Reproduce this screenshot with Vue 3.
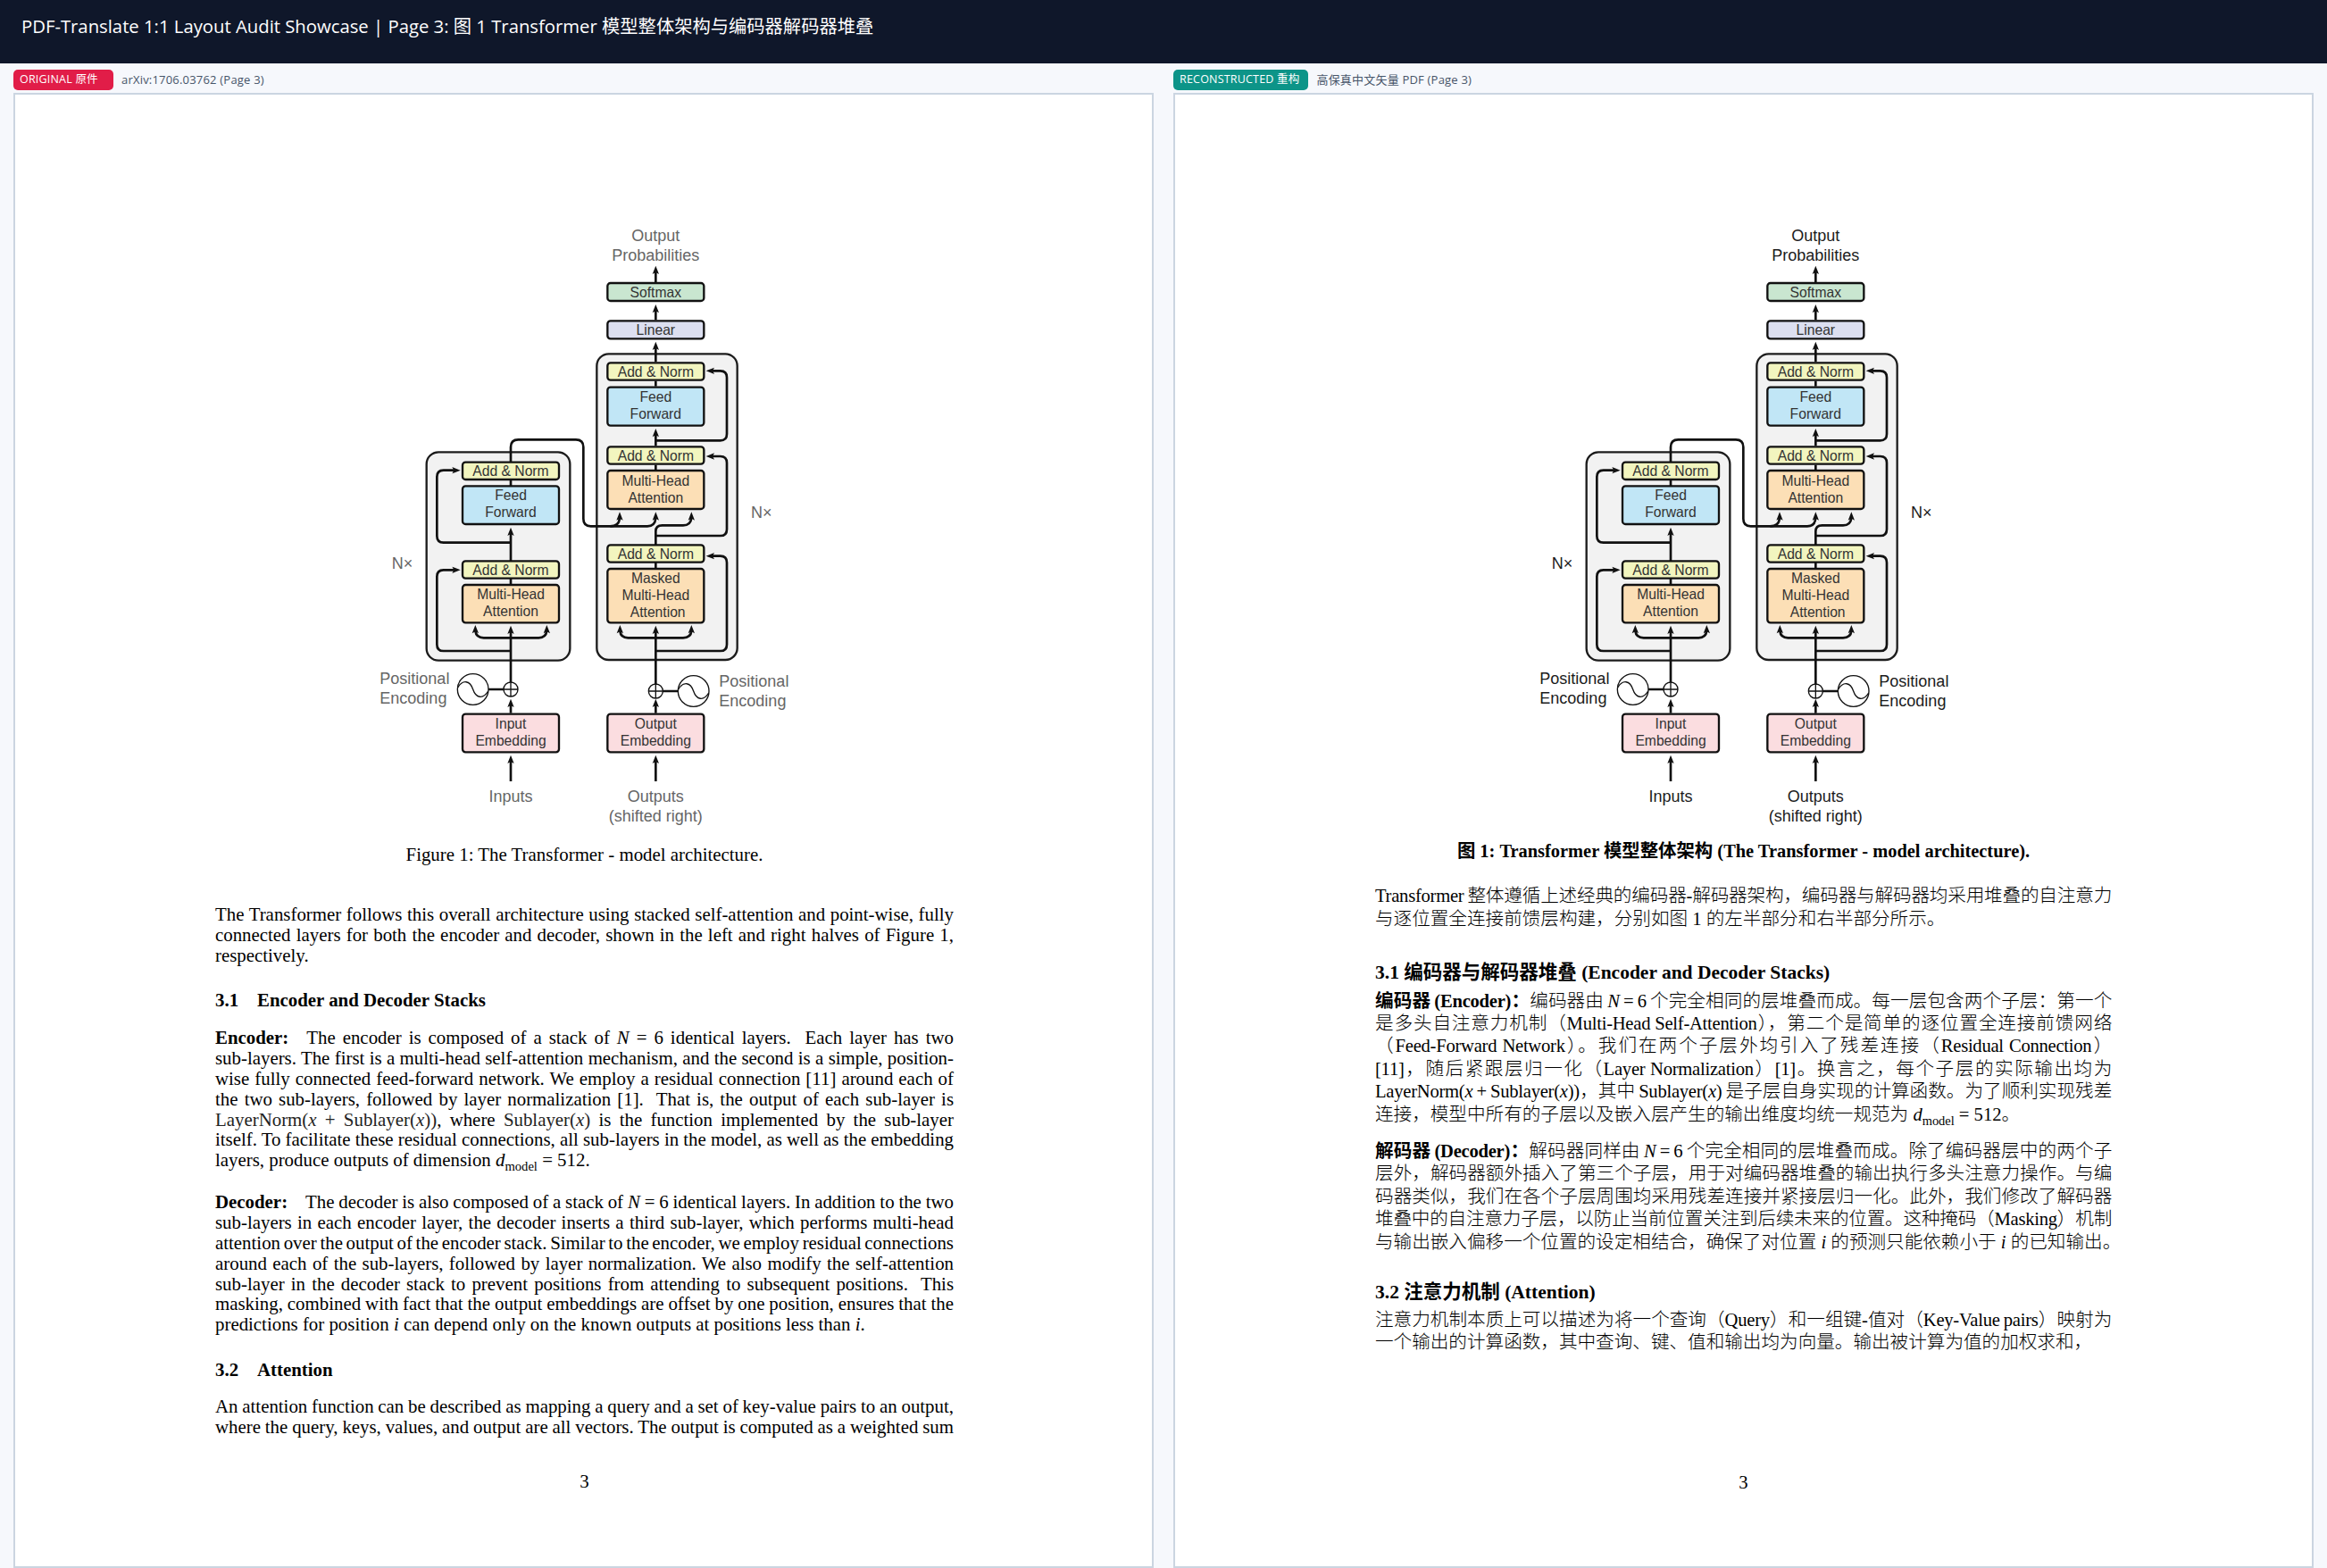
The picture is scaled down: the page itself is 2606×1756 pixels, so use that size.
<template>
  <div class="showcase">
    <header class="topbar">PDF-Translate 1:1 Layout Audit Showcase | Page 3: 图 1 Transformer 模型整体架构与编码器解码器堆叠</header>
    <main class="compare">
      <section v-for="panel in panels" :key="panel.id" class="panel">
        <div class="panel__head">
          <span class="badge" :class="'badge--' + panel.id">{{ panel.badge }}</span>
          <span class="panel__source">{{ panel.source }}</span>
        </div>
        <div class="sheet" :class="'sheet--' + panel.id">
          <svg class="diagram" viewBox="0 0 1560 2100" width="520" height="700">
            <!-- encoder and decoder stacks -->
            <rect v-for="s in stacks" :key="s.x" :x="s.x" :y="s.y" :width="s.w" :height="s.h" rx="40" fill="#f2f2f2" stroke="#1c1c1c" stroke-width="7" />
            <!-- wires -->
            <path v-for="(d, i) in wires" :key="i" :d="d" fill="none" stroke="#111" stroke-width="8" />
            <path v-for="(a, i) in arrowPaths" :key="i" :d="a" fill="#111" />
            <!-- blocks -->
            <g v-for="b in blocks" :key="b.x + '-' + b.y">
              <rect :x="b.x" :y="b.y" width="324" :height="b.h" rx="10" :fill="b.fill" stroke="#111" stroke-width="7" />
              <text v-for="t in b.lines" :key="t.s" class="block-text" :x="t.x || b.x + 162" :y="t.y" text-anchor="middle">{{ t.s }}</text>
            </g>
            <!-- positional encoding -->
            <g v-for="p in encodings" :key="p.plus" fill="none" stroke="#111">
              <line :x1="p.plus" :y1="p.y" :x2="p.sine" :y2="p.y" stroke-width="7" />
              <circle :cx="p.plus" :cy="p.y" r="24" fill="#fff" stroke-width="4" />
              <path :d="`M${p.plus - 24} ${p.y}H${p.plus + 24}M${p.plus} ${p.y - 24}V${p.y + 24}`" stroke-width="4" />
              <circle :cx="p.sine" :cy="p.y" r="52" fill="#fff" stroke-width="4" />
              <path :d="`M${p.sine - 51} ${p.y - 6}C${p.sine - 34} ${p.y - 34} ${p.sine - 10} ${p.y - 30} ${p.sine} ${p.y}S${p.sine + 34} ${p.y + 34} ${p.sine + 51} ${p.y + 6}`" stroke-width="4" />
            </g>
            <text v-for="l in labels" :key="l.s + l.y" class="outer-text" :class="'outer-text--' + panel.id" :x="l.x" :y="l.y" :text-anchor="l.anchor || 'middle'">{{ l.s }}</text>
          </svg>

          <template v-if="panel.id === 'original'">
            <p class="en-caption">Figure 1: The Transformer - model architecture.</p>
            <p class="en-par en-par--intro">
              <span class="ln">The Transformer follows this overall architecture using stacked self-attention and point-wise, fully</span>
              <span class="ln">connected layers for both the encoder and decoder, shown in the left and right halves of Figure 1,</span>
              <span class="ln ln--end">respectively.</span>
            </p>
            <h3 class="en-head en-head--first"><span class="en-head__no">3.1</span>Encoder and Decoder Stacks</h3>
            <p class="en-par en-par--enc">
              <span class="ln"><b class="run-in">Encoder:</b>The encoder is composed of a stack of <i>N</i> = 6 identical layers.&nbsp; Each layer has two</span>
              <span class="ln">sub-layers. The first is a multi-head self-attention mechanism, and the second is a simple, position-</span>
              <span class="ln">wise fully connected feed-forward network. We employ a residual connection [11] around each of</span>
              <span class="ln">the two sub-layers, followed by layer normalization [1].&nbsp; That is, the output of each sub-layer is</span>
              <span class="ln"><span class="cm">LayerNorm(<i>x</i> + Sublayer(<i>x</i>))</span>, where <span class="cm">Sublayer(<i>x</i>)</span> is the function implemented by the sub-layer</span>
              <span class="ln">itself. To facilitate these residual connections, all sub-layers in the model, as well as the embedding</span>
              <span class="ln ln--end">layers, produce outputs of dimension <i>d</i><sub>model</sub> = 512.</span>
            </p>
            <p class="en-par en-par--dec">
              <span class="ln"><b class="run-in">Decoder:</b>The decoder is also composed of a stack of <i>N</i> = 6 identical layers. In addition to the two</span>
              <span class="ln">sub-layers in each encoder layer, the decoder inserts a third sub-layer, which performs multi-head</span>
              <span class="ln">attention over the output of the encoder stack. Similar to the encoder, we employ residual connections</span>
              <span class="ln">around each of the sub-layers, followed by layer normalization. We also modify the self-attention</span>
              <span class="ln">sub-layer in the decoder stack to prevent positions from attending to subsequent positions.&nbsp; This</span>
              <span class="ln">masking, combined with fact that the output embeddings are offset by one position, ensures that the</span>
              <span class="ln ln--end">predictions for position <i>i</i> can depend only on the known outputs at positions less than <i>i</i>.</span>
            </p>
            <h3 class="en-head en-head--second"><span class="en-head__no">3.2</span>Attention</h3>
            <p class="en-par en-par--att">
              <span class="ln">An attention function can be described as mapping a query and a set of key-value pairs to an output,</span>
              <span class="ln">where the query, keys, values, and output are all vectors. The output is computed as a weighted sum</span>
            </p>
            <p class="en-folio">3</p>
          </template>

          <template v-else>
            <p class="zh-caption">图 1: Transformer 模型整体架构 (The Transformer - model architecture).</p>
            <p class="zh-par zh-par--intro">
              <span class="ln">Transformer 整体遵循上述经典的编码器-解码器架构，编码器与解码器均采用堆叠的自注意力</span>
              <span class="ln ln--end">与逐位置全连接前馈层构建，分别如图 1 的左半部分和右半部分所示。</span>
            </p>
            <h3 class="zh-head zh-head--first">3.1 编码器与解码器堆叠 (Encoder and Decoder Stacks)</h3>
            <p class="zh-par zh-par--enc">
              <span class="ln"><b>编码器 (Encoder)：</b>编码器由 <i>N</i> = 6 个完全相同的层堆叠而成。每一层包含两个子层：第一个</span>
              <span class="ln">是多头自注意力机制（Multi-Head Self-Attention），第二个是简单的逐位置全连接前馈网络</span>
              <span class="ln">（Feed-Forward Network）。我们在两个子层外均引入了残差连接（Residual Connection）</span>
              <span class="ln">[11]，随后紧跟层归一化（Layer Normalization）[1]。换言之，每个子层的实际输出均为</span>
              <span class="ln">LayerNorm(<i>x</i> + Sublayer(<i>x</i>))，其中 Sublayer(<i>x</i>) 是子层自身实现的计算函数。为了顺利实现残差</span>
              <span class="ln ln--end">连接，模型中所有的子层以及嵌入层产生的输出维度均统一规范为 <i>d</i><sub>model</sub> = 512。</span>
            </p>
            <p class="zh-par zh-par--dec">
              <span class="ln"><b>解码器 (Decoder)：</b>解码器同样由 <i>N</i> = 6 个完全相同的层堆叠而成。除了编码器层中的两个子</span>
              <span class="ln">层外，解码器额外插入了第三个子层，用于对编码器堆叠的输出执行多头注意力操作。与编</span>
              <span class="ln">码器类似，我们在各个子层周围均采用残差连接并紧接层归一化。此外，我们修改了解码器</span>
              <span class="ln">堆叠中的自注意力子层，以防止当前位置关注到后续未来的位置。这种掩码（Masking）机制</span>
              <span class="ln ln--end">与输出嵌入偏移一个位置的设定相结合，确保了对位置 <i>i</i> 的预测只能依赖小于 <i>i</i> 的已知输出。</span>
            </p>
            <h3 class="zh-head zh-head--second">3.2 注意力机制 (Attention)</h3>
            <p class="zh-par zh-par--att">
              <span class="ln">注意力机制本质上可以描述为将一个查询（Query）和一组键-值对（Key-Value pairs）映射为</span>
              <span class="ln ln--end">一个输出的计算函数，其中查询、键、值和输出均为向量。输出被计算为值的加权求和，</span>
            </p>
            <p class="zh-folio">3</p>
          </template>
        </div>
      </section>
    </main>
  </div>
</template>

<script setup>
const panels = [
  { id: 'original', badge: 'ORIGINAL 原件', source: 'arXiv:1706.03762 (Page 3)' },
  { id: 'rebuilt', badge: 'RECONSTRUCTED 重构', source: '高保真中文矢量 PDF (Page 3)' },
]

// all diagram numbers are in viewBox units (3 units = 1px)
const DEC = 841
const ENC = 354
const GREEN = '#f2f5bf'
const BLUE = '#c1e6f6'
const ORANGE = '#fcdfb6'
const PINK = '#fbdde0'

const stacks = [
  { x: 233, y: 829, w: 482, h: 700 },
  { x: 805, y: 499, w: 472, h: 1028 },
]

const blocks = [
  { x: DEC, y: 261, h: 60, fill: '#c9e6d0', lines: [{ s: 'Softmax', y: 309 }] },
  { x: DEC, y: 388, h: 60, fill: '#dcdff0', lines: [{ s: 'Linear', y: 435 }] },
  { x: DEC, y: 529, h: 58, fill: GREEN, lines: [{ s: 'Add & Norm', y: 575 }] },
  { x: DEC, y: 611, h: 129, fill: BLUE, lines: [{ s: 'Feed', y: 659 }, { s: 'Forward', y: 716 }] },
  { x: DEC, y: 811, h: 58, fill: GREEN, lines: [{ s: 'Add & Norm', y: 858 }] },
  { x: DEC, y: 891, h: 129, fill: ORANGE, lines: [{ s: 'Multi-Head', y: 942 }, { s: 'Attention', y: 1000 }] },
  { x: DEC, y: 1141, h: 58, fill: GREEN, lines: [{ s: 'Add & Norm', y: 1187 }] },
  { x: DEC, y: 1221, h: 181, fill: ORANGE, lines: [{ s: 'Masked', y: 1269 }, { s: 'Multi-Head', y: 1327 }, { s: 'Attention', y: 1384, x: 1010 }] },
  { x: DEC, y: 1709, h: 128, fill: PINK, lines: [{ s: 'Output', y: 1759 }, { s: 'Embedding', y: 1816 }] },
  { x: ENC, y: 863, h: 58, fill: GREEN, lines: [{ s: 'Add & Norm', y: 909 }] },
  { x: ENC, y: 943, h: 128, fill: BLUE, lines: [{ s: 'Feed', y: 991 }, { s: 'Forward', y: 1047 }] },
  { x: ENC, y: 1195, h: 58, fill: GREEN, lines: [{ s: 'Add & Norm', y: 1241 }] },
  { x: ENC, y: 1275, h: 127, fill: ORANGE, lines: [{ s: 'Multi-Head', y: 1322 }, { s: 'Attention', y: 1380 }] },
  { x: ENC, y: 1709, h: 128, fill: PINK, lines: [{ s: 'Input', y: 1759 }, { s: 'Embedding', y: 1816 }] },
]

const wires = [
  // decoder spine
  'M1003 225V258', 'M1003 352V385', 'M1003 478V526', 'M1003 590V608', 'M1003 770V808', 'M1003 872V888',
  'M1003 1141V1095Q1003 1075 1025 1075H1095Q1121 1075 1123 1050',
  'M1003 1199V1221', 'M1003 1432V1632', 'M1003 1680V1706', 'M1003 1868V1935',
  // encoder output into the decoder attention
  'M516 863V812Q516 787 541 787H735Q760 787 760 812V1053Q760 1078 785 1078H975Q1001 1078 1003 1050',
  'M850 1078Q880 1078 882 1050',
  // decoder residuals
  'M1003 790H1220Q1242 790 1242 768V578Q1242 556 1220 556H1190',
  'M1003 1110H1220Q1242 1110 1242 1088V865Q1242 843 1220 843H1190',
  'M1003 1497H1220Q1242 1497 1242 1475V1200Q1242 1178 1220 1178H1190',
  'M883 1430Q885 1453 910 1453H1095Q1121 1453 1123 1430',
  // encoder spine
  'M516 1100V1195', 'M516 921V943', 'M516 1253V1275', 'M516 1432V1626', 'M516 1680V1706', 'M516 1868V1935',
  'M516 1133H290Q268 1133 268 1111V912Q268 890 290 890H330',
  'M516 1497H290Q268 1497 268 1475V1247Q268 1225 290 1225H330',
  'M397 1430Q400 1453 425 1453H610Q634 1453 637 1430',
]

const up = ([x, y]) => `M${x} ${y}L${x + 11} ${y + 28}L${x} ${y + 22}L${x - 11} ${y + 28}Z`
const left = ([x, y]) => `M${x} ${y}L${x + 28} ${y - 11}L${x + 22} ${y}L${x + 28} ${y + 11}Z`
const right = ([x, y]) => `M${x} ${y}L${x - 28} ${y - 11}L${x - 22} ${y}L${x - 28} ${y + 11}Z`

const arrowPaths = [
  ...[[1003, 203], [1003, 333], [1003, 458], [1003, 750], [882, 1030], [1003, 1030], [1123, 1030], [883, 1410], [1003, 1412], [1123, 1410], [1003, 1658], [1003, 1847],
    [516, 1082], [397, 1410], [516, 1412], [637, 1410], [516, 1658], [516, 1847]].map(up),
  ...[[1172, 556], [1172, 843], [1172, 1178]].map(left),
  ...[[347, 890], [347, 1225]].map(right),
]

const encodings = [
  { plus: 516, sine: 389, y: 1626 },
  { plus: 1003, sine: 1130, y: 1632 },
]

const labels = [
  { s: 'Output', x: 1003, y: 120 },
  { s: 'Probabilities', x: 1003, y: 186 },
  { s: 'N×', x: 1323, y: 1050, anchor: 'start' },
  { s: 'N×', x: 116, y: 1220, anchor: 'start' },
  { s: 'Positional', x: 76, y: 1607, anchor: 'start' },
  { s: 'Encoding', x: 76, y: 1675, anchor: 'start' },
  { s: 'Positional', x: 1216, y: 1616, anchor: 'start' },
  { s: 'Encoding', x: 1216, y: 1683, anchor: 'start' },
  { s: 'Inputs', x: 516, y: 2003 },
  { s: 'Outputs', x: 1003, y: 2003 },
  { s: '(shifted right)', x: 1003, y: 2070 },
]
</script>

<style>
html,
body {
  margin: 0;
  background: #f6f8fc;
}
</style>

<style scoped>
.showcase {
  height: 1756px;
  overflow: hidden;
  display: flex;
  flex-direction: column;
  background: #f6f8fc;
}

.topbar {
  height: 71px;
  flex: none;
  box-sizing: border-box;
  padding: 17px 24px 0;
  background: #0f172a;
  color: #fff;
  font: 20.3px/24px "Open Sans", "Noto Sans CJK SC", sans-serif;
}

.compare {
  flex: 1;
  min-height: 0;
  display: grid;
  grid-template-columns: 1fr 1fr;
  gap: 22px;
  padding: 0 15px;
}

.panel {
  display: flex;
  flex-direction: column;
  min-width: 0;
  min-height: 0;
}

.panel__head {
  height: 33px;
  flex: none;
  display: flex;
  align-items: flex-start;
  gap: 9px;
  padding-top: 7px;
  box-sizing: border-box;
}

.badge {
  height: 23px;
  box-sizing: border-box;
  padding: 0 10px 0 7px;
  border-radius: 5px;
  color: #fff;
  font: 12.5px/22px "Open Sans", "Noto Sans CJK SC", sans-serif;
  letter-spacing: 0.2px;
}

.badge--original {
  background: #e11d48;
  min-width: 112px;
}

.badge--rebuilt {
  background: #0d9488;
}

.panel__source {
  color: #475569;
  font: 13px/23px "Open Sans", "Noto Sans CJK SC", sans-serif;
  letter-spacing: 0.2px;
}

.sheet {
  flex: 1;
  min-height: 0;
  overflow: hidden;
  background: #fff;
  border: 2px solid #cbd5e1;
  box-sizing: border-box;
  padding: 124px 224px 0;
  color: #000;
}

.sheet--original {
  padding-right: 222px;
}

.diagram {
  display: block;
  margin-left: 159px;
  overflow: visible;
}

.block-text {
  font: 47px "Liberation Sans", sans-serif;
  fill: #333;
}

.outer-text {
  font: 54px "Liberation Sans", sans-serif;
}

.outer-text--original {
  fill: #666;
}

.outer-text--rebuilt {
  fill: #1c1c1c;
}

.sheet p,
.sheet h3 {
  margin: 0;
}

.ln {
  display: block;
  white-space: nowrap;
  text-align: justify;
  text-align-last: justify;
}

.ln--end {
  text-align-last: left;
}

sub {
  font-size: 0.7em;
  line-height: 0;
}

/* original page */
.en-caption,
.en-par,
.en-head,
.en-folio {
  font: 20.87px/22.85px "Liberation Serif", serif;
}

.en-caption,
.en-folio {
  text-align: center;
}

.en-caption {
  margin-top: 16px !important;
}

.en-par {
  word-spacing: -1.6px;
}

.en-par .ln--end {
  word-spacing: 0;
}

.en-par--intro {
  margin-top: 44px !important;
}

.en-head {
  font-weight: 700;
}

.en-head--first {
  margin-top: 28px !important;
}

.en-head--second {
  margin-top: 28px !important;
}

.en-head__no {
  display: inline-block;
  width: 47px;
}

.en-par--enc {
  margin-top: 19px !important;
}

.en-par--dec {
  margin-top: 24px !important;
}

.en-par--att {
  margin-top: 18px !important;
}

.en-folio {
  margin-top: 38px !important;
}

.run-in {
  margin-right: 20px;
}

.cm {
  color: #222;
}

/* rebuilt page */
.zh-caption,
.zh-par,
.zh-head,
.zh-folio {
  font: 20.6px/25.4px "Liberation Serif", "Noto Sans CJK SC", serif;
}

.zh-caption {
  margin-top: 11px !important;
  text-align: center;
  font-weight: 700;
  font-size: 20.4px;
}

.zh-par {
  letter-spacing: -0.25px;
  word-spacing: -1px;
  font-weight: 300;
}

.zh-par b {
  font-weight: 700;
}

.zh-par .ln--end {
  letter-spacing: 0;
  word-spacing: 0;
}

.zh-par--intro {
  margin-top: 25px !important;
}

.zh-head {
  font-size: 21.5px;
  font-weight: 700;
}

.zh-head--first {
  margin-top: 35px !important;
}

.zh-head--second {
  margin-top: 31px !important;
}

.zh-par--enc {
  margin-top: 6px !important;
}

.zh-par--dec {
  margin-top: 16px !important;
}

.zh-par--att {
  margin-top: 5px !important;
}

.zh-folio {
  margin-top: 132px !important;
  text-align: center;
}
</style>
